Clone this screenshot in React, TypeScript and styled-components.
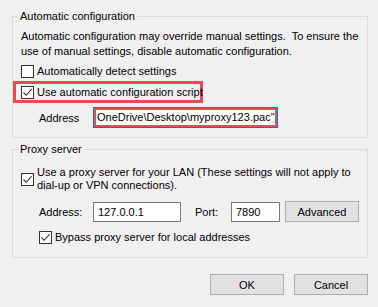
import * as React from 'react';
import styled, { createGlobalStyle } from 'styled-components';

const GlobalStyle = createGlobalStyle`
    html, body {
        margin: 0;
        padding: 0;
        background: #f0f0f0;
    }
    body {
        font-family: "Liberation Sans", Arial, sans-serif;
        font-size: 11px;
        color: #000;
    }
`;

const CheckMark = (): JSX.Element =>
    <svg width="11" height="11" viewBox="0 0 11 11">
        <path d="M1.5 5.5 L4.2 8.3 L9.6 2.2" fill="none" stroke="#333" strokeWidth="1.1" />
    </svg>
;

const CheckBox = ({ checked, label }: CheckProps): JSX.Element =>
    <CheckRow>
        <Box>{checked && <CheckMark />}</Box>
        <CheckLabel>{label}</CheckLabel>
    </CheckRow>
;

interface CheckProps {
    checked?: boolean;
    label: React.ReactNode;
}

export default function App(): JSX.Element {
    return (
        <>
            <GlobalStyle />
            <Page>
                <Group $height={129}>
                    <Legend>Automatic configuration</Legend>
                    <Description>
                        Automatic configuration may override manual settings.&nbsp; To ensure the<br />
                        use of manual settings, disable automatic configuration.
                    </Description>
                    <CheckLine $top={6}>
                        <CheckBox label="Automatically detect settings" />
                    </CheckLine>
                    <Highlight>
                        <CheckBox checked label="Use automatic configuration script" />
                    </Highlight>
                    <FieldRow $top={4} $indent={18}>
                        <FieldLabel $width={54}>Address</FieldLabel>
                        <FocusInput>
                            <InputText>OneDrive\Desktop\myproxy123.pac"</InputText>
                        </FocusInput>
                    </FieldRow>
                </Group>
                <Group $height={116} $top={4}>
                    <Legend>Proxy server</Legend>
                    <CheckLine $top={10}>
                        <CheckBox
                            checked
                            label={<>Use a proxy server for your LAN (These settings will not apply to<br />dial-up or VPN connections).</>}
                        />
                    </CheckLine>
                    <FieldRow $top={9} $indent={18}>
                        <FieldLabel $width={54}>Address:</FieldLabel>
                        <TextInput $width={88}>127.0.0.1</TextInput>
                        <FieldLabel $width={36} $gap={14}>Port:</FieldLabel>
                        <TextInput $width={49}>7890</TextInput>
                        <Button $width={74} $gap={5}>Advanced</Button>
                    </FieldRow>
                    <CheckLine $top={9} $indent={18}>
                        <CheckBox checked label="Bypass proxy server for local addresses" />
                    </CheckLine>
                </Group>
                <Footer>
                    <Button $width={74}>OK</Button>
                    <Button $width={74}>Cancel</Button>
                </Footer>
            </Page>
        </>
    );
}

const Page = styled.div`
    width: 378px;
    height: 307px;
    box-sizing: border-box;
    padding: 9px 10px 0 12px;
    display: flex;
    flex-direction: column;
`;

const Group = styled.fieldset<{ $height: number; $top?: number }>`
    margin: ${p => p.$top || 0}px 0 0;
    padding: 0 0 0 8px;
    border: 1px solid #dcdcdc;
    min-width: 0;
    height: ${p => p.$height}px;
    box-sizing: border-box;
`;

const Legend = styled.legend`
    margin-left: -3px;
    padding: 0 2px;
    line-height: 14px;
`;

const Description = styled.p`
    margin: 6px 0 0;
    line-height: 15px;
    white-space: nowrap;
`;

const CheckLine = styled.div<{ $top: number; $indent?: number }>`
    margin: ${p => p.$top}px 0 0 ${p => p.$indent || 0}px;
`;

const CheckRow = styled.div`
    display: flex;
    align-items: center;
    gap: 3px;
`;

const Box = styled.span`
    width: 13px;
    height: 13px;
    box-sizing: border-box;
    border: 1px solid #333;
    background: #fff;
    display: flex;
    align-items: center;
    justify-content: center;
    flex: none;
`;

const CheckLabel = styled.span`
    line-height: 13px;
    white-space: nowrap;
`;

const Highlight = styled.div`
    margin: 3px 0 0 -8px;
    width: 190px;
    height: 22px;
    box-sizing: border-box;
    border: 3px solid #ea4a51;
    padding-left: 5px;
    display: flex;
    align-items: center;
`;

const FieldRow = styled.div<{ $top: number; $indent: number }>`
    margin: ${p => p.$top}px 0 0 ${p => p.$indent}px;
    display: flex;
    align-items: center;
`;

const FieldLabel = styled.span<{ $width: number; $gap?: number }>`
    width: ${p => p.$width}px;
    margin-left: ${p => p.$gap || 0}px;
    flex: none;
`;

const FocusInput = styled.div`
    width: 185px;
    height: 21px;
    box-sizing: border-box;
    border: 1px solid #0078d7;
    display: flex;
`;

const InputText = styled.div`
    flex: 1;
    background: #fff;
    border: 2px solid #ea4a51;
    padding-left: 1px;
    line-height: 15px;
    white-space: nowrap;
    overflow: hidden;
`;

const TextInput = styled.div<{ $width: number }>`
    width: ${p => p.$width}px;
    height: 20px;
    box-sizing: border-box;
    border: 1px solid #7a7a7a;
    background: #fff;
    padding: 0 4px;
    line-height: 18px;
    flex: none;
`;

const Button = styled.div<{ $width: number; $gap?: number }>`
    width: ${p => p.$width}px;
    height: 21px;
    margin-left: ${p => p.$gap || 0}px;
    box-sizing: border-box;
    border: 1px solid #adadad;
    background: #e1e1e1;
    display: flex;
    align-items: center;
    justify-content: center;
    flex: none;
`;

const Footer = styled.div`
    margin-top: 16px;
    display: flex;
    justify-content: flex-end;
    gap: 10px;
`;
